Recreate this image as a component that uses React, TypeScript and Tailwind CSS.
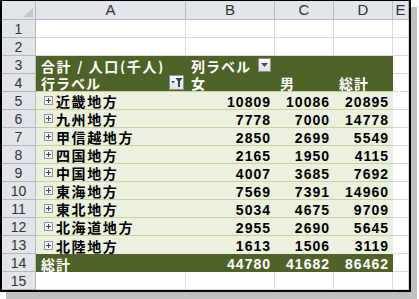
import React from 'react';

const jp = "font-['Noto_Sans_CJK_JP','Noto_Sans',sans-serif]";
const num = "font-['Liberation_Sans',Arial,sans-serif]";

const rows = [
  { name: '近畿地方', f: 10809, m: 10086, t: 20895 },
  { name: '九州地方', f: 7778, m: 7000, t: 14778 },
  { name: '甲信越地方', f: 2850, m: 2699, t: 5549 },
  { name: '四国地方', f: 2165, m: 1950, t: 4115 },
  { name: '中国地方', f: 4007, m: 3685, t: 7692 },
  { name: '東海地方', f: 7569, m: 7391, t: 14960 },
  { name: '東北地方', f: 5034, m: 4675, t: 9709 },
  { name: '北海道地方', f: 2955, m: 2690, t: 5645 },
  { name: '北陸地方', f: 1613, m: 1506, t: 3119 },
];

function RowHead({ n }: { n: number }) {
  return (
    <div className={`w-[34px] shrink-0 border-r border-b border-[#b4b9bf] bg-[#e1e4e8] flex items-center justify-center pt-[1px] text-[14px] leading-[16px] text-[#333] ${num}`}>
      {n}
    </div>
  );
}

// empty grid cells for a plain white row
function BlankCells() {
  return (
    <>
      <div className="w-[150px] shrink-0 border-r border-b border-[#d9dadb]" />
      <div className="w-[89px] shrink-0 border-r border-b border-[#d9dadb]" />
      <div className="w-[59px] shrink-0 border-r border-b border-[#d9dadb]" />
      <div className="w-[59px] shrink-0 border-r border-b border-[#d9dadb]" />
      <div className="w-[16px] shrink-0 border-r border-b border-[#d9dadb]" />
    </>
  );
}

function ECell() {
  return <div className="w-[16px] shrink-0 border-r border-b border-[#d9dadb] bg-white" />;
}

function ExpandBox() {
  return (
    <svg width="9" height="9" viewBox="0 0 9 9" className="shrink-0">
      <rect x="0.5" y="0.5" width="8" height="8" fill="#f4f6f8" stroke="#8c96a0" />
      <path d="M2 4.5h5M4.5 2v5" stroke="#34495e" strokeWidth="1" />
    </svg>
  );
}

function DropButton() {
  return (
    <div className="w-[13px] h-[14px] border border-[#8a9199] bg-gradient-to-b from-[#ffffff] to-[#dde1e5] flex items-center justify-center">
      <svg width="7" height="4" viewBox="0 0 7 4">
        <path d="M0 0h7L3.5 4z" fill="#4a4f55" />
      </svg>
    </div>
  );
}

function FilterButton() {
  return (
    <div className="w-[15px] h-[15px] border border-[#8a9199] bg-gradient-to-b from-[#ffffff] to-[#dde1e5] flex items-center justify-center">
      <svg width="12" height="9" viewBox="0 0 12 9">
        <path d="M0 3h4L2 5.5z" fill="#4a4f55" />
        <path d="M4.5 0h7L9 3.5V9H7V3.5z" fill="#3c4147" />
      </svg>
    </div>
  );
}

export default function App() {
  return (
    <div className="w-[419px] h-[299px] bg-white overflow-hidden">
      <div className="w-[411px] h-[292px] border-2 border-t border-black bg-white overflow-hidden shadow-[6px_7px_0_#c0c0c0]">
        {/* column headers */}
        <div className={`flex h-[19px] bg-[#e1e4e8] text-[15px] leading-[16px] text-[#333] ${num}`}>
          <div className="w-[34px] shrink-0 border-r border-b border-[#b4b9bf] flex items-end justify-end pr-[2px] pb-[2px]">
            <svg width="10" height="9" viewBox="0 0 10 9">
              <path d="M10 0v9H0z" fill="#c3c8ce" />
            </svg>
          </div>
          <div className="w-[150px] shrink-0 border-r border-b border-[#b4b9bf] flex items-center justify-center">A</div>
          <div className="w-[89px] shrink-0 border-r border-b border-[#b4b9bf] flex items-center justify-center">B</div>
          <div className="w-[59px] shrink-0 border-r border-b border-[#b4b9bf] flex items-center justify-center">C</div>
          <div className="w-[59px] shrink-0 border-r border-b border-[#b4b9bf] flex items-center justify-center">D</div>
          <div className="w-[16px] shrink-0 border-r border-b border-[#b4b9bf] flex items-center justify-center">E</div>
        </div>

        <div className="flex h-[18px]"><RowHead n={1} /><BlankCells /></div>
        <div className="flex h-[18px]"><RowHead n={2} /><BlankCells /></div>

        {/* pivot header row 3 */}
        <div className="flex h-[18px]">
          <RowHead n={3} />
          <div className={`w-[357px] shrink-0 flex items-center bg-[#4f6228] text-white font-bold text-[14px] leading-[16px] tracking-[1px] ${jp}`}>
            <div className="w-[150px] pl-[5px] pt-[1px] whitespace-nowrap tracking-[1.6px]">合計 / 人口(千人)</div>
            <div className="w-[89px] flex items-center justify-between pl-[5px] pr-[4px]">
              <span className="pt-[1px]">列ラベル</span>
              <DropButton />
            </div>
          </div>
          <ECell />
        </div>

        {/* pivot header row 4 */}
        <div className="flex h-[18px]">
          <RowHead n={4} />
          <div className={`w-[357px] shrink-0 flex items-center bg-[#4f6228] border-b border-[#c4d79b] text-white font-bold text-[14px] leading-[16px] tracking-[1px] ${jp}`}>
            <div className="w-[150px] flex items-center justify-between pl-[5px] pr-[2px]">
              <span className="pt-[1px]">行ラベル</span>
              <FilterButton />
            </div>
            <div className="w-[89px] pl-[5px] pt-[1px]">女</div>
            <div className="w-[59px] pl-[5px] pt-[1px]">男</div>
            <div className="w-[59px] pl-[5px] pt-[1px]">総計</div>
          </div>
          <ECell />
        </div>

        {rows.map((r, i) => (
          <div key={r.name} className="flex h-[18px]">
            <RowHead n={i + 5} />
            <div className={`w-[357px] shrink-0 flex items-center bg-[#ebf1de] text-black font-bold leading-[16px] ${i < rows.length - 1 ? 'border-b border-[#c4d79b]' : ''}`}>
              <div className="w-[150px] flex items-center gap-[3px] pl-[8px]">
                <ExpandBox />
                <span className={`text-[14px] tracking-[1.6px] pt-[1px] ${jp}`}>{r.name}</span>
              </div>
              <div className={`w-[89px] text-right pr-[4px] pt-[2px] text-[14px] tracking-[1px] ${num}`}>{r.f}</div>
              <div className={`w-[59px] text-right pr-[4px] pt-[2px] text-[14px] tracking-[1px] ${num}`}>{r.m}</div>
              <div className={`w-[59px] text-right pr-[4px] pt-[2px] text-[14px] tracking-[1px] ${num}`}>{r.t}</div>
            </div>
            <ECell />
          </div>
        ))}

        {/* grand total row 14 */}
        <div className="flex h-[18px]">
          <RowHead n={14} />
          <div className="w-[357px] shrink-0 flex items-center bg-[#4f6228] text-white font-bold leading-[16px]">
            <div className={`w-[150px] pl-[5px] pt-[1px] text-[14px] tracking-[1px] ${jp}`}>総計</div>
            <div className={`w-[89px] text-right pr-[4px] pt-[2px] text-[14px] tracking-[1px] ${num}`}>44780</div>
            <div className={`w-[59px] text-right pr-[4px] pt-[2px] text-[14px] tracking-[1px] ${num}`}>41682</div>
            <div className={`w-[59px] text-right pr-[4px] pt-[2px] text-[14px] tracking-[1px] ${num}`}>86462</div>
          </div>
          <ECell />
        </div>

        <div className="flex h-[18px]"><RowHead n={15} /><BlankCells /></div>
      </div>
    </div>
  );
}
